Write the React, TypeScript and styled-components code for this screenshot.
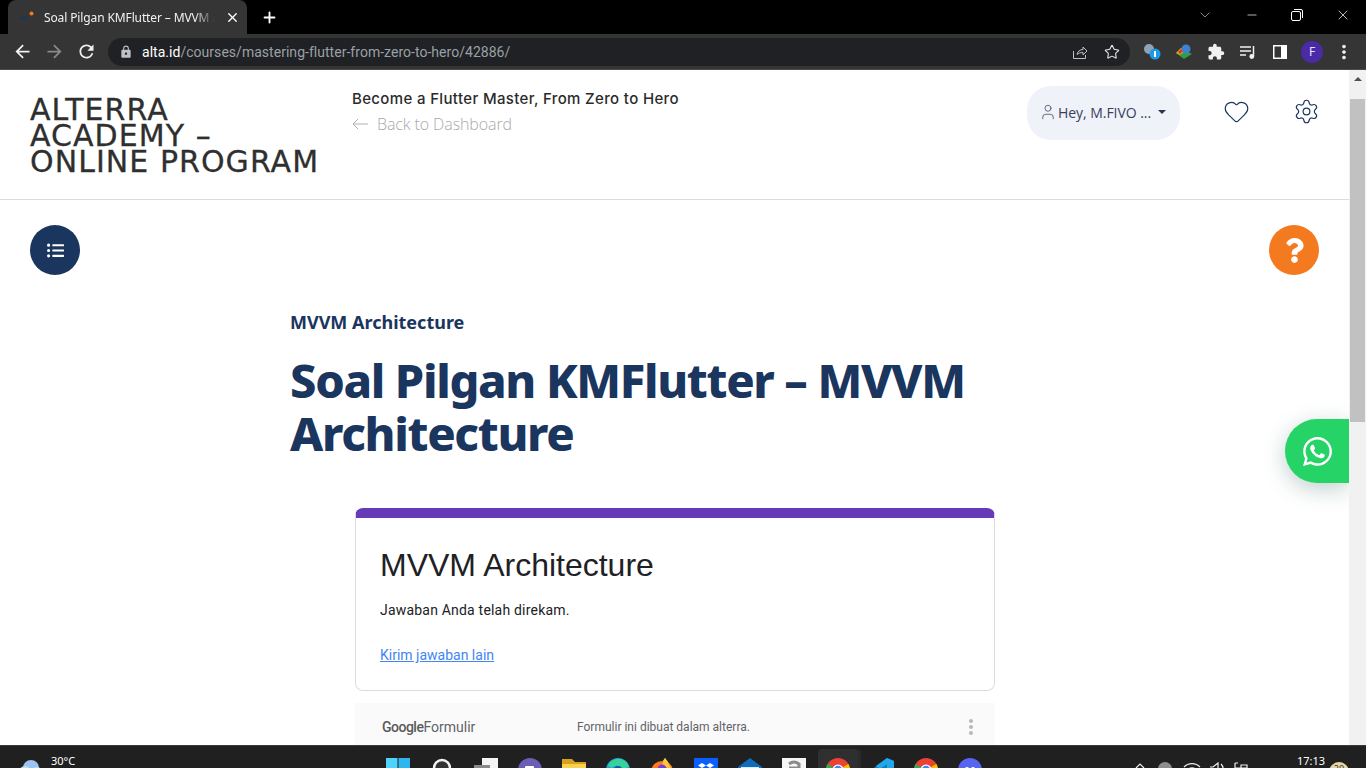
import React from "react";
import styled, { createGlobalStyle } from "styled-components";
import { Heart, Settings, User, Star, X, Plus, ChevronDown, Minus } from "lucide-react";
import { MdArrowBack, MdArrowForward, MdRefresh, MdLock, MdExtension, MdMoreVert } from "react-icons/md";
import { FaWhatsapp, FaQuestion, FaListUl } from "react-icons/fa";

const GlobalStyle = createGlobalStyle`
  html, body { margin: 0; padding: 0; height: 100%; overflow: hidden; background: #fff; }
  * { box-sizing: border-box; }
`;

const Screen = styled.div`
  width: 1366px;
  height: 768px;
  display: flex;
  flex-direction: column;
  overflow: hidden;
  position: relative;
  font-family: "Noto Sans", sans-serif;
`;

/* browser chrome */
const TabStrip = styled.div`
  height: 34px;
  background: #000;
  display: flex;
  align-items: flex-end;
  padding-left: 8px;
  color: #fff;
`;

const Tab = styled.div`
  width: 239px;
  height: 34px;
  background: #353535;
  border-radius: 8px 8px 0 0;
  display: flex;
  align-items: center;
  padding: 0 7px 0 11px;
  gap: 10px;
`;

const TabTitle = styled.span`
  flex: 1;
  font-size: 12px;
  letter-spacing: -0.12px;
  white-space: nowrap;
  overflow: hidden;
  color: #f1f1f1;
  -webkit-mask-image: linear-gradient(to right, #000 88%, transparent 100%);
  mask-image: linear-gradient(to right, #000 88%, transparent 100%);
`;

const NewTab = styled.div`
  width: 20px;
  margin-left: 14px;
  height: 34px;
  display: flex;
  align-items: center;
`;

const WindowButtons = styled.div`
  margin-left: auto;
  height: 29px;
  align-self: flex-start;
  display: flex;
  align-items: center;
  padding-right: 15px;
  gap: 32px;
`;

const Toolbar = styled.div`
  height: 36px;
  background: #353535;
  display: flex;
  align-items: center;
  padding: 0 6px 0 12px;
  border-bottom: 1px solid #4a4a4a;
`;

const NavButtons = styled.div`
  display: flex;
  gap: 11px;
  width: 96px;
`;

const UrlBar = styled.div`
  width: 1022px;
  height: 28px;
  border-radius: 14px;
  background: #202124;
  display: flex;
  align-items: center;
  padding: 0 10px 0 11px;
  gap: 9px;
  font-family: "Roboto", sans-serif;
  font-size: 14px;
  color: #9aa0a6;
`;

const UrlText = styled.span`
  flex: 1;
  letter-spacing: 0.03px;
  b { color: #fff; font-weight: 400; }
`;

const UrlActions = styled.div`
  display: flex;
  align-items: center;
  gap: 16px;
`;

const Extensions = styled.div`
  display: flex;
  align-items: center;
  margin-left: 6px;
`;

const ExtensionSlot = styled.div`
  width: 32px;
  display: flex;
  align-items: center;
  justify-content: center;
`;

const Avatar = styled.div`
  width: 22px;
  height: 22px;
  border-radius: 50%;
  background: #4b2aa8;
  color: #e8e0ff;
  display: flex;
  align-items: center;
  justify-content: center;
  font-size: 12px;
`;

/* page */
const Viewport = styled.div`
  flex: 1;
  min-height: 0;
  display: flex;
`;

const Page = styled.div`
  flex: 1;
  min-width: 0;
  background: #fff;
  overflow: hidden;
  position: relative;
`;

const Header = styled.header`
  height: 130px;
  border-bottom: 1px solid #dcdcdc;
  display: flex;
  padding: 0 30px;
`;

const Logo = styled.div`
  width: 322px;
  padding-top: 27px;
  font-family: "DejaVu Sans", sans-serif;
  font-size: 30px;
  line-height: 26px;
  color: #2f2f2f;
  letter-spacing: 1.05px;
  -webkit-text-stroke: 0.3px #2f2f2f;
  white-space: nowrap;
`;

const CourseInfo = styled.div`
  flex: 1;
  padding-top: 19px;
`;

const CourseName = styled.div`
  font-family: "Inter", sans-serif;
  font-size: 15px;
  font-weight: 500;
  line-height: 20px;
  color: #2b2b2b;
  letter-spacing: 0.35px;
`;

const BackLink = styled.div`
  margin-top: 4px;
  display: flex;
  align-items: center;
  gap: 9px;
  font-family: "Open Sans", sans-serif;
  font-size: 16px;
  font-weight: 300;
  line-height: 22px;
  letter-spacing: -0.1px;
  color: #a9a9a9;
`;

const UserPill = styled.div`
  width: 153px;
  height: 54px;
  margin-top: 16px;
  border-radius: 24px;
  background: #eff2f9;
  display: flex;
  align-items: center;
  padding: 0 0 2px 12px;
  gap: 1px;
  font-family: "Open Sans", sans-serif;
  font-size: 14px;
  letter-spacing: -0.05px;
  color: #39405a;
  white-space: nowrap;
`;

const Caret = styled.span`
  margin-left: 6px;
  width: 0;
  height: 0;
  border-left: 4px solid transparent;
  border-right: 4px solid transparent;
  border-top: 4px solid #2b3350;
`;

const HeaderIcons = styled.div`
  margin-left: 43px;
  padding-top: 28px;
  display: flex;
  gap: 43px;
  color: #1a355e;
  margin-right: -1px;
`;

const ActionRow = styled.div`
  display: flex;
  justify-content: space-between;
  padding: 25px 30px 0;
`;

const RoundButton = styled.div<{ $bg: string }>`
  width: 50px;
  height: 50px;
  border-radius: 50%;
  background: ${({ $bg }) => $bg};
  color: #fff;
  display: flex;
  align-items: center;
  justify-content: center;
`;

const Article = styled.main`
  margin-left: 290px;
  padding-top: 34px;
  width: 700px;
`;

const Eyebrow = styled.div`
  font-size: 18px;
  font-weight: 700;
  line-height: 26px;
  color: #1a355e;
`;

const Title = styled.h1`
  margin: 19px 0 0;
  font-family: "Noto Sans", sans-serif;
  font-size: 47px;
  font-weight: 800;
  line-height: 53px;
  letter-spacing: -1.33px;
  color: #1a355e;
`;

const FormCard = styled.section`
  margin: 48px 0 0 65px;
  width: 640px;
  height: 183px;
  border: 1px solid #dadce0;
  border-top: 10px solid #673ab7;
  border-radius: 8px;
  padding: 28px 24px 0;
  background: #fff;
`;

const FormTitle = styled.div`
  font-family: "Liberation Sans", sans-serif;
  font-size: 32px;
  line-height: 38px;
  color: #202124;
`;

const FormText = styled.div`
  margin-top: 16px;
  font-family: "Roboto", sans-serif;
  font-size: 14px;
  line-height: 20px;
  letter-spacing: 0.2px;
  color: #202124;
`;

const FormLink = styled.a`
  display: block;
  margin-top: 25px;
  font-family: "Roboto", sans-serif;
  font-size: 14px;
  line-height: 20px;
  color: #4285f4;
  text-decoration: underline;
`;

const FormFooter = styled.div`
  margin: 12px 0 0 65px;
  width: 640px;
  height: 48px;
  background: #fafafa;
  display: flex;
  align-items: center;
  padding: 0 12px 0 27px;
  font-family: "Roboto", sans-serif;
  color: #5f6368;
`;

const GoogleForms = styled.div`
  width: 195px;
  font-size: 14px;
  b { font-weight: 500; color: #5a5a5a; letter-spacing: -0.5px; }
`;

const FooterNote = styled.div`
  flex: 1;
  font-size: 12px;
`;

const WhatsApp = styled.div`
  position: absolute;
  right: 0;
  top: 349px;
  width: 64px;
  height: 64px;
  border-radius: 32px 0 0 32px;
  background: #25d366;
  color: #fff;
  display: flex;
  align-items: center;
  justify-content: center;
  box-shadow: 0 6px 22px rgba(30, 90, 80, 0.28);
`;

const Scrollbar = styled.div`
  width: 17px;
  background: #f1f1f1;
  display: flex;
  flex-direction: column;
  align-items: center;
`;

const ScrollArrow = styled.div`
  height: 17px;
  display: flex;
  align-items: center;
  &::before {
    content: "";
    border-left: 4px solid transparent;
    border-right: 4px solid transparent;
    border-bottom: 4px solid #505050;
  }
`;

const ScrollThumb = styled.div`
  width: 15px;
  height: 323px;
  margin-top: 12px;
  background: #c1c1c1;
`;

/* taskbar */
const Taskbar = styled.div`
  height: 23px;
  background: #202020;
  border-top: 1px solid #3a3a3a;
  display: flex;
  overflow: hidden;
  color: #fff;
  position: relative;
`;

const Weather = styled.div`
  width: 386px;
  display: flex;
  padding-left: 20px;
  gap: 9px;
`;

const WeatherIcon = styled.svg`
  margin-top: 13px;
`;

const WeatherText = styled.div`
  font-family: "Noto Sans", sans-serif;
  font-size: 11px;
  line-height: 14px;
  padding-top: 8px;
`;

const TaskIcons = styled.div`
  display: flex;
  gap: 20px;
`;

const TaskSlot = styled.div<{ $active?: boolean }>`
  width: 24px;
  height: 24px;
  margin-top: 12px;
  position: relative;
  ${({ $active }) =>
    $active &&
    `
    &::before {
      content: "";
      position: absolute;
      left: -8px;
      right: -8px;
      top: -9px;
      height: 40px;
      background: #2f2f2f;
      border-radius: 4px;
      box-shadow: 3px 0 0 #2a2a2a;
    }
    svg { position: relative; }
  `}
`;

const Tray = styled.div`
  margin-left: auto;
  display: flex;
  padding-right: 17px;
`;

const TrayIcons = styled.div`
  display: flex;
  gap: 8px;
  padding-top: 16px;
  margin-right: 48px;
`;

const Clock = styled.div`
  font-family: "Noto Sans", sans-serif;
  font-size: 11px;
  line-height: 14px;
  padding-top: 8px;
  margin-right: 4px;
`;

const Badge = styled.div`
  width: 20px;
  height: 20px;
  margin-top: 16px;
  border-radius: 50%;
  background: #e3d6a2;
  color: #333;
  font-size: 9px;
  text-align: center;
  line-height: 14px;
`;

const ChromeIcon = () => (
  <svg width="24" height="24" viewBox="0 0 24 24">
    <circle cx="12" cy="12" r="12" fill="#ea4335" />
    <path d="M12 12 L22.4 6 A12 12 0 0 1 12 24 Z" fill="#fbbc04" />
    <path d="M12 12 L12 24 A12 12 0 0 1 1.6 6 Z" fill="#34a853" />
    <circle cx="12" cy="12" r="5.5" fill="#fff" />
    <circle cx="12" cy="12" r="4.2" fill="#4285f4" />
  </svg>
);

const taskIcons: React.ReactNode[] = [
  <svg width="24" height="24" viewBox="0 0 24 24" key="win">
    <rect x="0" y="0" width="11.5" height="11.5" fill="#4fd2fb" />
    <rect x="12.5" y="0" width="11.5" height="11.5" fill="#2fb6ee" />
  </svg>,
  <svg width="24" height="24" viewBox="0 0 24 24" key="search">
    <circle cx="12" cy="10" r="8" fill="#333" stroke="#f2f2f2" strokeWidth="2.4" />
  </svg>,
  <svg width="24" height="24" viewBox="0 0 24 24" key="view">
    <rect x="8" y="0" width="16" height="16" fill="#f4f4f4" />
    <rect x="0" y="7" width="16" height="16" fill="#8a8a8a" />
  </svg>,
  <svg width="24" height="24" viewBox="0 0 24 24" key="meet">
    <circle cx="12" cy="12" r="12" fill="#6a5fb5" />
    <rect x="7" y="8" width="9" height="8" rx="1" fill="#fff" />
  </svg>,
  <svg width="24" height="24" viewBox="0 0 24 24" key="folder">
    <path d="M0 1 h10 l3 3 h11 v18 h-24z" fill="#d6a11e" />
    <rect x="0" y="6" width="24" height="16" fill="#fbd14b" />
  </svg>,
  <svg width="24" height="24" viewBox="0 0 24 24" key="edge">
    <circle cx="12" cy="12" r="12" fill="#1f9fd8" />
    <path d="M2 8 A11 11 0 0 1 23 9 L16 11 A6 6 0 0 0 6 10 Z" fill="#37d39a" />
    <circle cx="12" cy="13" r="5" fill="#0c5f9e" />
  </svg>,
  <svg width="24" height="24" viewBox="0 0 24 24" key="fox">
    <path d="M2 14 L6 5 L9 8 L15 0 L22 9 L23 14 Z" fill="#ffc93c" />
    <circle cx="12" cy="14" r="11" fill="#ff7a1f" />
    <path d="M15 0 L21 10 L11 9 Z" fill="#ffc93c" />
    <circle cx="12" cy="11" r="4.500" fill="#7b3fd0" />
  </svg>,
  <svg width="24" height="24" viewBox="0 0 24 24" key="box">
    <rect width="24" height="24" fill="#0b5fff" />
    <path d="M8 5 l4 2.5 -4 2.5 -4 -2.5z M16 5 l4 2.5 -4 2.5 -4 -2.5z" fill="#fff" />
  </svg>,
  <svg width="24" height="24" viewBox="0 0 24 24" key="mail">
    <path d="M0 9 L12 0 L24 9 V24 H0 Z" fill="#0f6cbd" />
    <path d="M3 9 h18 v6 h-18z" fill="#d8eefb" />
  </svg>,
  <svg width="24" height="24" viewBox="0 0 24 24" key="a">
    <rect width="24" height="24" fill="#f6f6f6" />
    <path d="M7 6 Q12 2 17 6 V20 M7 10 H17" stroke="#8a8a8a" strokeWidth="3" fill="none" />
  </svg>,
  <ChromeIcon key="chrome1" />,
  <svg width="24" height="24" viewBox="0 0 24 24" key="code">
    <path d="M17 0 L24 3 V21 L17 24 L6 13 L2 16 L0 14 L5 9 Z" fill="#0a7fc4" />
    <path d="M17 0 L24 3 V21 L17 24 V6 L10 11 L6 8 Z" fill="#22a7ea" />
  </svg>,
  <ChromeIcon key="chrome2" />,
  <svg width="24" height="24" viewBox="0 0 24 24" key="discord">
    <circle cx="12" cy="12" r="12" fill="#5865f2" />
    <circle cx="9" cy="11" r="2" fill="#fff" />
    <circle cx="15" cy="11" r="2" fill="#fff" />
  </svg>,
];

const App = () => (
  <Screen>
    <GlobalStyle />
    <TabStrip>
      <Tab>
        <svg width="15" height="12" viewBox="0 0 15 12">
          <rect x="0" y="6" width="9" height="2" fill="#1a355e" />
          <circle cx="12.5" cy="2.5" r="2" fill="#f47a20" />
        </svg>
        <TabTitle>Soal Pilgan KMFlutter – MVVM Architecture</TabTitle>
        <X size={15} color="#fff" strokeWidth={2.2} />
      </Tab>
      <NewTab>
        <Plus size={17} strokeWidth={2.6} />
      </NewTab>
      <WindowButtons>
        <ChevronDown size={16} strokeWidth={1} color="#cfcfcf" />
        <Minus size={14} strokeWidth={1.2} />
        <svg width="12" height="12" viewBox="0 0 12 12" fill="none" stroke="#fff">
          <rect x="0.5" y="2.5" width="9" height="9" rx="1.5" />
          <path d="M3 .5h7a1.5 1.5 0 0 1 1.5 1.5v7" />
        </svg>
        <X size={16} strokeWidth={1.1} />
      </WindowButtons>
    </TabStrip>
    <Toolbar>
      <NavButtons>
        <MdArrowBack size={21} color="#f1f1f1" />
        <MdArrowForward size={21} color="#8a8a8a" />
        <MdRefresh size={21} color="#f1f1f1" />
      </NavButtons>
      <UrlBar>
        <MdLock size={14} color="#bdc1c6" />
        <UrlText>
          <b>alta.id</b>/courses/mastering-flutter-from-zero-to-hero/42886/
        </UrlText>
        <UrlActions>
          <svg width="16" height="16" viewBox="0 0 16 16" fill="none" stroke="#bdc1c6" strokeWidth="1">
            <path d="M1.5 7v7.5h12V11" />
            <path d="M5 10.5c.5-3 3-5 6-5V3l4 4-4 4V8.5c-2.500 0-4.500.6-6 2z" />
          </svg>
          <Star size={16} color="#e8eaed" strokeWidth={1.6} />
        </UrlActions>
      </UrlBar>
      <Extensions>
        <ExtensionSlot>
          <svg width="18" height="18" viewBox="0 0 18 18">
            <circle cx="6" cy="6" r="5" fill="#8fa3b8" />
            <circle cx="12" cy="11" r="5.500" fill="#1a9be8" />
            <rect x="11" y="8" width="2" height="6" fill="#fff" />
          </svg>
        </ExtensionSlot>
        <ExtensionSlot>
          <svg width="18" height="18" viewBox="0 0 18 18">
            <path d="M1 10 L6 5 L17 11 L9 16 Z" fill="#2f9e44" />
            <path d="M1 10 L6 5 L9 9 L5 12 Z" fill="#e8a317" />
            <circle cx="11" cy="6" r="4.500" fill="#3b82d6" />
            <path d="M3 9 l3 -3 2 2 -3 3z" fill="#d9362b" />
          </svg>
        </ExtensionSlot>
        <ExtensionSlot>
          <MdExtension size={18} color="#f1f1f1" />
        </ExtensionSlot>
        <ExtensionSlot>
          <svg width="18" height="18" viewBox="0 0 18 18" fill="none" stroke="#f1f1f1" strokeWidth="1.5">
            <path d="M1 4h11M1 8h11M1 12h6" />
            <path d="M14.500 3v10" />
            <circle cx="12.800" cy="13.500" r="1.700" fill="#f1f1f1" />
          </svg>
        </ExtensionSlot>
        <ExtensionSlot>
          <svg width="14" height="14" viewBox="0 0 14 14">
            <rect width="14" height="14" fill="#fff" />
            <rect x="1.500" y="1.500" width="6.500" height="11" fill="#353535" />
          </svg>
        </ExtensionSlot>
        <ExtensionSlot>
          <Avatar>F</Avatar>
        </ExtensionSlot>
        <ExtensionSlot>
          <MdMoreVert size={22} color="#f1f1f1" />
        </ExtensionSlot>
      </Extensions>
    </Toolbar>
    <Viewport>
      <Page>
        <Header>
          <Logo>
            ALTERRA
            <br />
            ACADEMY –
            <br />
            ONLINE PROGRAM
          </Logo>
          <CourseInfo>
            <CourseName>Become a Flutter Master, From Zero to Hero</CourseName>
            <BackLink>
              <svg width="16" height="12" viewBox="0 0 16 12" fill="none" stroke="#a9a9a9" strokeWidth="0.9">
                <path d="M16 6H1M6 1 1 6l5 5" />
              </svg>
              Back to Dashboard
            </BackLink>
          </CourseInfo>
          <UserPill>
            <User size={18} strokeWidth={1} color="#39405a" />
            Hey, M.FIVO ...
            <Caret />
          </UserPill>
          <HeaderIcons>
            <Heart size={27} strokeWidth={1.05} />
            <Settings size={27} strokeWidth={1.05} />
          </HeaderIcons>
        </Header>
        <ActionRow>
          <RoundButton $bg="#1a355e">
            <FaListUl size={17} />
          </RoundButton>
          <RoundButton $bg="#f47a20">
            <FaQuestion size={25} />
          </RoundButton>
        </ActionRow>
        <Article>
          <Eyebrow>MVVM Architecture</Eyebrow>
          <Title>Soal Pilgan KMFlutter – MVVM Architecture</Title>
          <FormCard>
            <FormTitle>MVVM Architecture</FormTitle>
            <FormText>Jawaban Anda telah direkam.</FormText>
            <FormLink>Kirim jawaban lain</FormLink>
          </FormCard>
          <FormFooter>
            <GoogleForms>
              <b>Google</b>Formulir
            </GoogleForms>
            <FooterNote>Formulir ini dibuat dalam alterra.</FooterNote>
            <MdMoreVert size={24} color="#b8b8b8" />
          </FormFooter>
        </Article>
        <WhatsApp>
          <FaWhatsapp size={33} />
        </WhatsApp>
      </Page>
      <Scrollbar>
        <ScrollArrow />
        <ScrollThumb />
      </Scrollbar>
    </Viewport>
    <Taskbar>
      <Weather>
        <WeatherIcon width="22" height="22" viewBox="0 0 22 22">
          <circle cx="11" cy="9" r="8" fill="#9dc3f0" />
          <circle cx="5" cy="13" r="6" fill="#c4dcf7" />
          <circle cx="17" cy="13" r="5" fill="#c4dcf7" />
        </WeatherIcon>
        <WeatherText>30°C</WeatherText>
      </Weather>
      <TaskIcons>
        {taskIcons.map((icon, i) => (
          <TaskSlot key={i} $active={i === 10}>
            {icon}
          </TaskSlot>
        ))}
      </TaskIcons>
      <Tray>
        <TrayIcons>
          <svg width="14" height="14" viewBox="0 0 14 14" fill="none" stroke="#eee" strokeWidth="1.2">
            <path d="M3 6l4-4 4 4" />
          </svg>
          <svg width="20" height="14" viewBox="0 0 20 14">
            <circle cx="10" cy="7" r="7" fill="#8d8d8d" />
          </svg>
          <svg width="18" height="14" viewBox="0 0 18 14" fill="none" stroke="#eee" strokeWidth="1.2">
            <path d="M1 5a11 11 0 0 1 16 0M4 8a7 7 0 0 1 10 0" />
          </svg>
          <svg width="16" height="14" viewBox="0 0 16 14" fill="none" stroke="#eee" strokeWidth="1.2">
            <path d="M1 5h3l5-4v13M12 2a7 7 0 0 1 2 6" />
          </svg>
          <svg width="16" height="14" viewBox="0 0 16 14" fill="none" stroke="#eee" strokeWidth="1.2">
            <path d="M2 1v5h12M5 1l-3 0M8 6V3h6v3" />
          </svg>
        </TrayIcons>
        <Clock>17:13</Clock>
        <Badge>20</Badge>
      </Tray>
    </Taskbar>
  </Screen>
);

export default App;
